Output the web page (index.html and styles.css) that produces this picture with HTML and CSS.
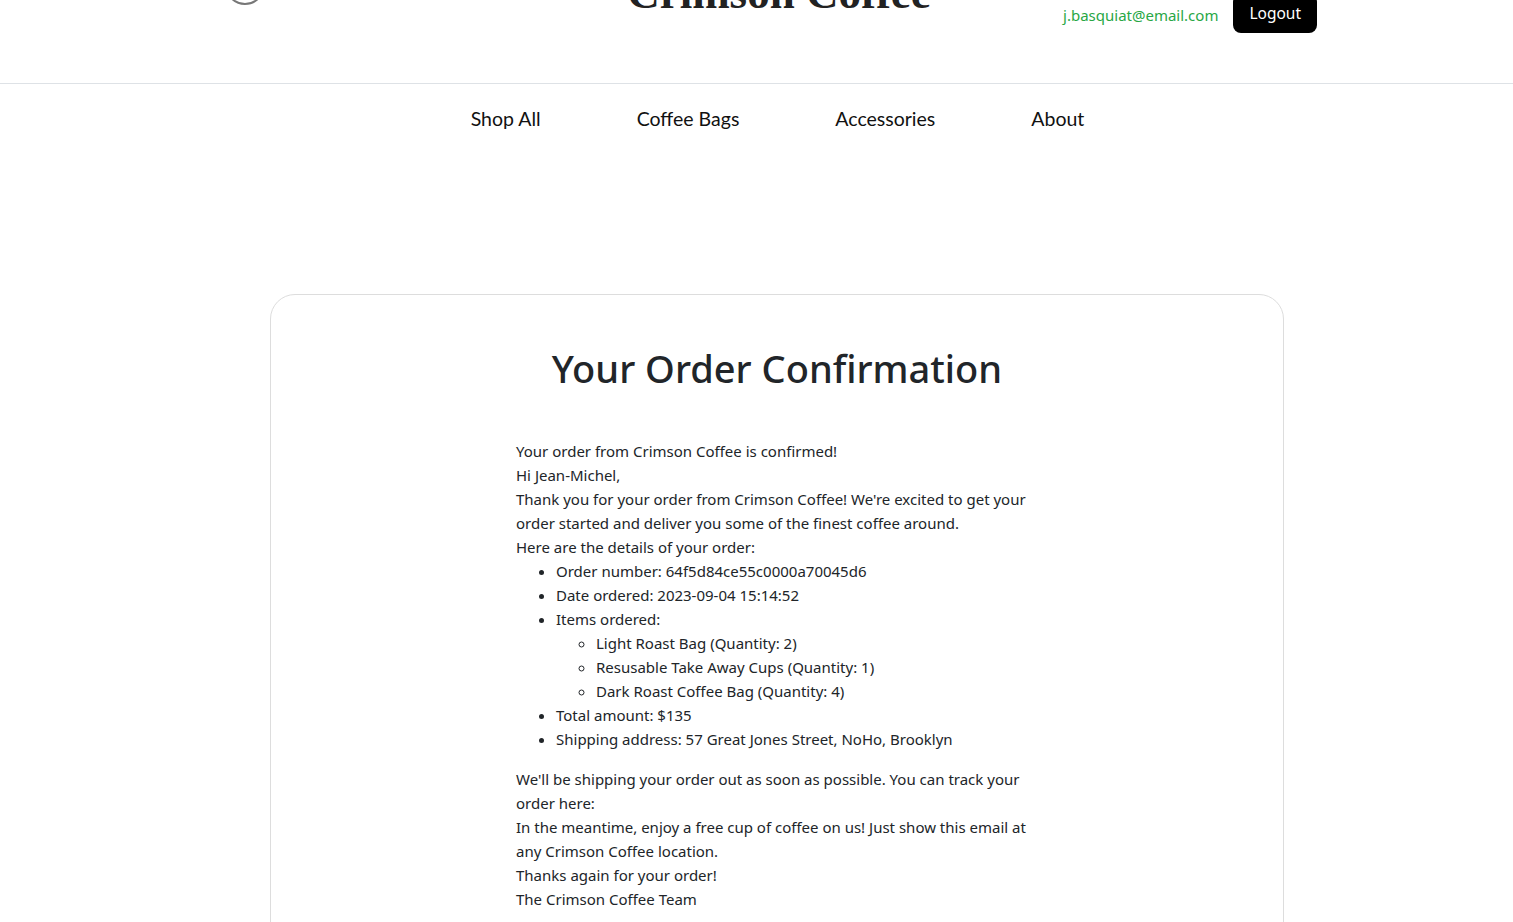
FILE: index.html
```html
<!DOCTYPE html>
<html lang="en">
<head>
<meta charset="utf-8">
<title>Crimson Coffee - Order Confirmation</title>
<link rel="stylesheet" href="styles.css">
</head>
<body>
<div class="page">
  <header class="site-header">
    <div class="header-left">
      <span class="icon-circle"></span>
    </div>
    <h1 class="brand">Crimson Coffee</h1>
    <div class="header-right">
      <a class="user-email" href="#">j.basquiat@email.com</a>
      <button class="btn-logout" type="button">Logout</button>
    </div>
  </header>

  <nav class="main-nav">
    <a class="nav-link" href="#">Shop All</a>
    <a class="nav-link" href="#">Coffee Bags</a>
    <a class="nav-link" href="#">Accessories</a>
    <a class="nav-link" href="#">About</a>
  </nav>

  <main class="content">
    <section class="card">
      <h2 class="card-title">Your Order Confirmation</h2>
      <div class="email-body">
        <div>Your order from Crimson Coffee is confirmed!</div>
        <div>Hi Jean-Michel,</div>
        <div>Thank you for your order from Crimson Coffee! We're excited to get your order started and deliver you some of the finest coffee around.</div>
        <div>Here are the details of your order:</div>
        <ul class="details">
          <li>Order number: 64f5d84ce55c0000a70045d6</li>
          <li>Date ordered: 2023-09-04 15:14:52</li>
          <li>Items ordered:
            <ul class="items">
              <li>Light Roast Bag (Quantity: 2)</li>
              <li>Resusable Take Away Cups (Quantity: 1)</li>
              <li>Dark Roast Coffee Bag (Quantity: 4)</li>
            </ul>
          </li>
          <li>Total amount: $135</li>
          <li>Shipping address: 57 Great Jones Street, NoHo, Brooklyn</li>
        </ul>
        <div>We'll be shipping your order out as soon as possible. You can track your order here:</div>
        <div>In the meantime, enjoy a free cup of coffee on us! Just show this email at any Crimson Coffee location.</div>
        <div>Thanks again for your order!</div>
        <div>The Crimson Coffee Team</div>
      </div>
    </section>
  </main>
</div>
</body>
</html>
```

FILE: styles.css
```css
* { box-sizing: border-box; }

html, body {
  margin: 0;
  padding: 0;
  background: #ffffff;
}

body {
  font-family: "Noto Sans", "Open Sans", Arial, sans-serif;
  color: #212529;
  overflow: hidden;
}

.page {
  margin-top: -50px;
}

/* Header */
.site-header {
  height: 134px;
  border-bottom: 1px solid #dee2e6;
  display: grid;
  grid-template-columns: 1fr auto 1fr;
  align-items: start;
  padding: 0 180px 0 225px;
}

.header-left {
  padding-top: 15px;
}

.icon-circle {
  display: block;
  width: 40px;
  height: 40px;
  border: 2px solid #777777;
  border-radius: 50%;
}

.brand {
  margin: 16px 0 0;
  font-family: "Liberation Serif", "Times New Roman", serif;
  font-weight: 700;
  font-size: 45px;
  line-height: 54px;
  color: #222222;
}

.header-right {
  display: flex;
  justify-content: flex-end;
  align-items: center;
  gap: 15px;
  padding-top: 44px;
  padding-right: 16px;
}

.user-email {
  color: #28a745;
  text-decoration: none;
  font-size: 15px;
  line-height: 24px;
  margin-top: 3px;
}

.btn-logout {
  background: #000000;
  color: #ffffff;
  border: none;
  border-radius: 8px;
  font-family: inherit;
  font-size: 15.5px;
  line-height: 26px;
  padding: 6px 16px 7px;
  cursor: pointer;
}

/* Nav */
.main-nav {
  display: flex;
  justify-content: center;
  gap: 96px;
  padding: 20px 0 20px 42px;
}

.nav-link {
  font-family: "Lato", "Liberation Sans", sans-serif;
  font-size: 19.5px;
  line-height: 30px;
  color: #111111;
  text-decoration: none;
}

/* Content */
.content {
  padding: 140px 0 0 41px;
  display: flex;
  justify-content: center;
}

.card {
  width: 1014px;
  min-height: 700px;
  border: 1px solid #dddddd;
  border-radius: 25px;
  padding: 49px 0 40px;
}

.card-title {
  margin: 0 0 47px;
  text-align: center;
  font-size: 38px;
  line-height: 48px;
  font-weight: 500;
  color: #212529;
}

.email-body {
  width: 522px;
  margin: 0 auto;
  font-size: 15px;
  line-height: 24px;
  color: #212529;
}

.details {
  margin: 0 0 16px;
  padding-left: 40px;
  list-style: disc;
}

.items {
  margin: 0;
  padding-left: 40px;
  list-style: circle;
}
```
